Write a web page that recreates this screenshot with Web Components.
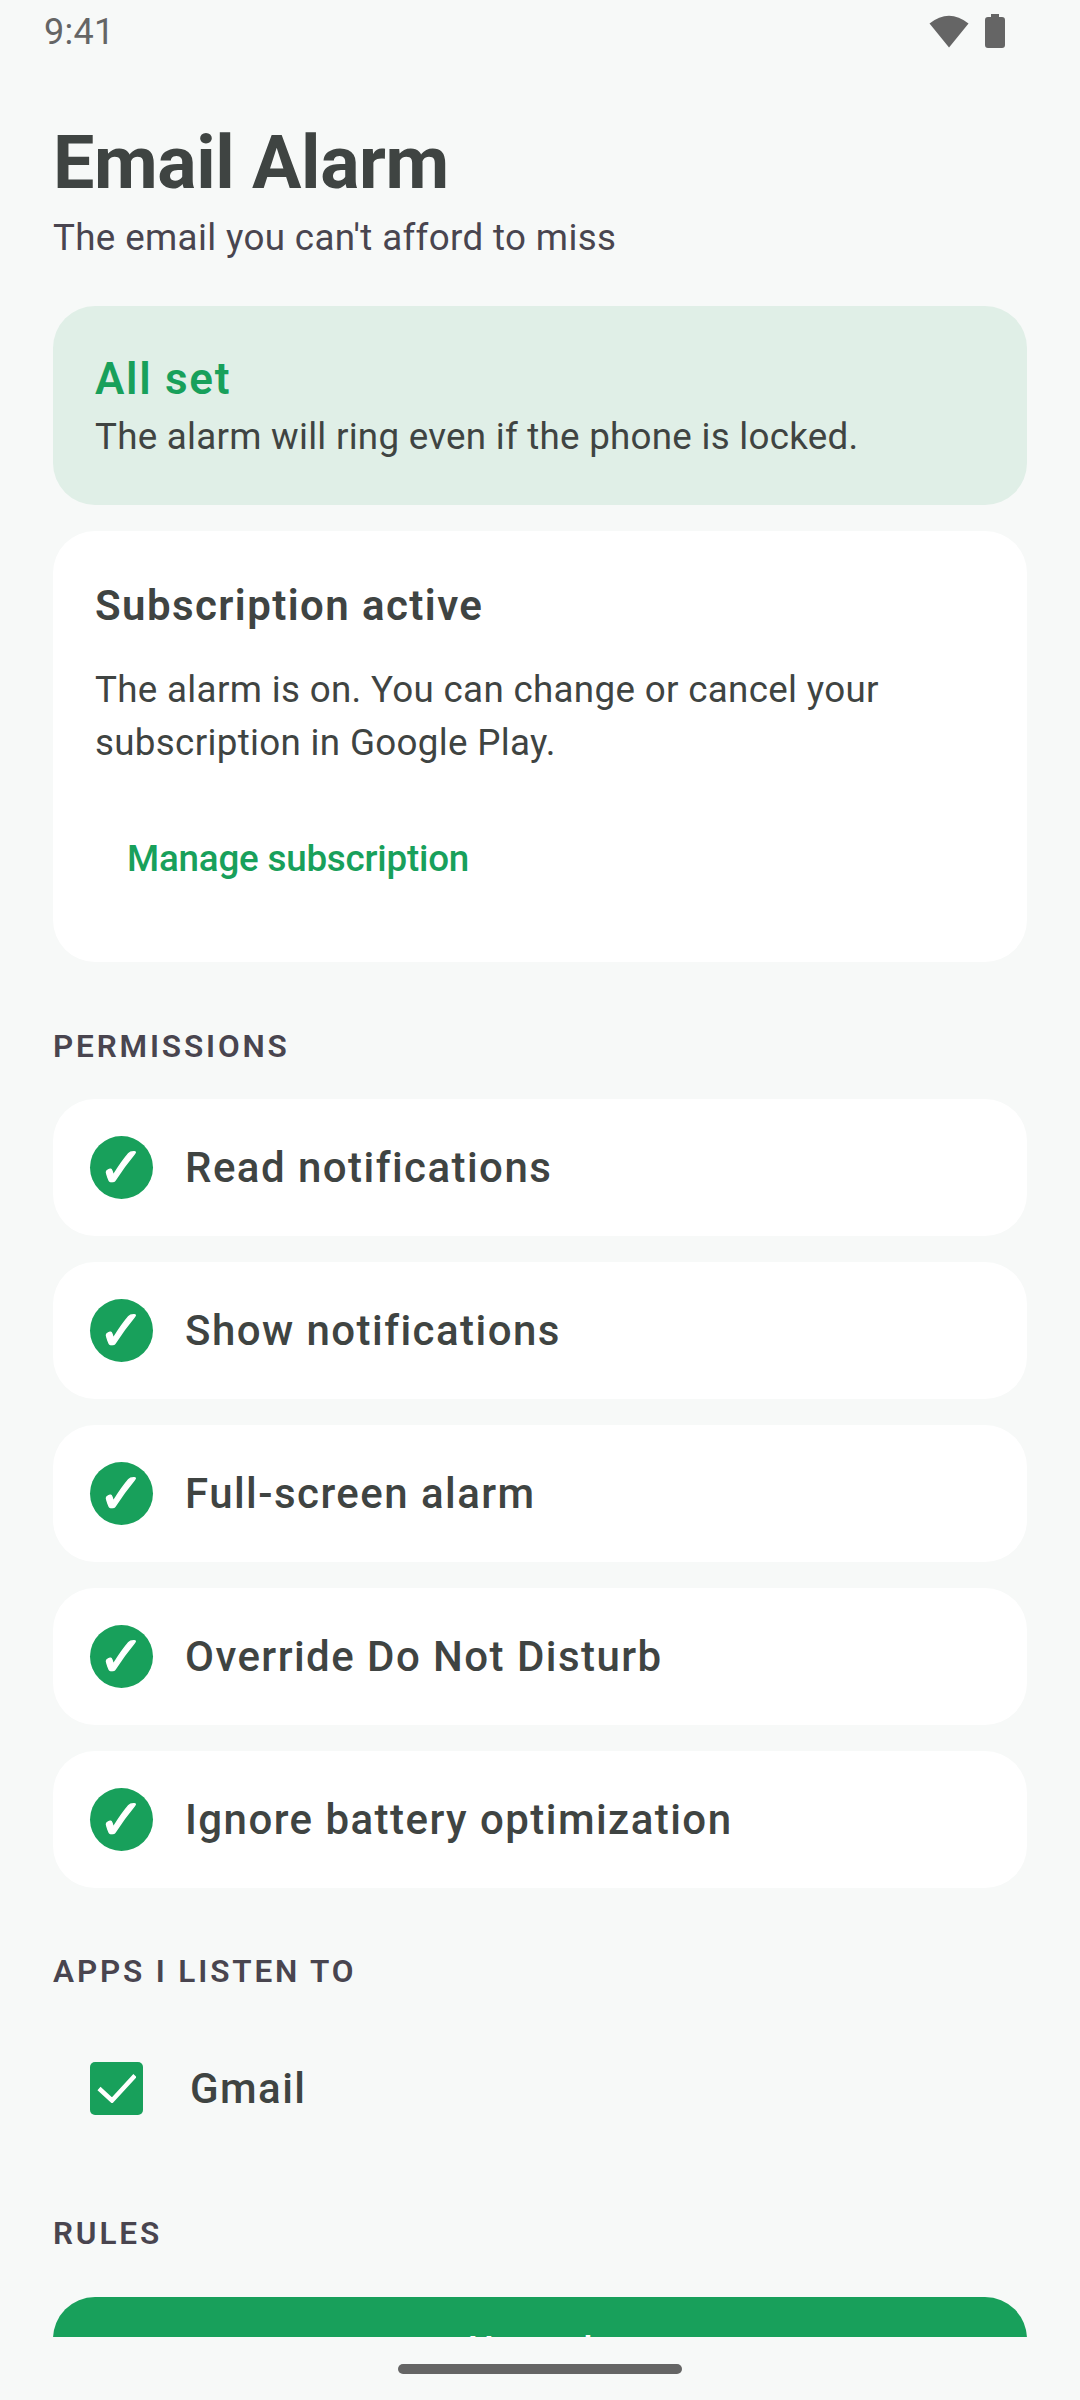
<!DOCTYPE html>
<html>
<head>
<meta charset="utf-8">
<style>
  html, body { margin: 0; padding: 0; background: #f7f9f8; }
  body { width: 1080px; height: 2400px; overflow: hidden; font-family: Roboto, sans-serif; color: #3f4442; }
</style>
</head>
<body>
<app-screen>
  <status-bar slot="status"></status-bar>
  <app-header title="Email Alarm" subtitle="The email you can't afford to miss"></app-header>
  <status-card heading="All set" text="The alarm will ring even if the phone is locked."></status-card>
  <subscription-card></subscription-card>
  <section-label>PERMISSIONS</section-label>
  <permission-row>Read notifications</permission-row>
  <permission-row>Show notifications</permission-row>
  <permission-row>Full-screen alarm</permission-row>
  <permission-row>Override Do Not Disturb</permission-row>
  <permission-row>Ignore battery optimization</permission-row>
  <section-label class="apps">APPS I LISTEN TO</section-label>
  <app-checkbox>Gmail</app-checkbox>
  <section-label class="rules">RULES</section-label>
  <primary-button>New rule</primary-button>
</app-screen>

<script>
// Pantalla completa: barra de estado, contenido recortado y barra de gestos
class AppScreen extends HTMLElement {
    constructor() {
        super();
        this.attachShadow({ mode: 'open' });
        this.shadowRoot.innerHTML = `
            <style>
                :host { display: flex; flex-direction: column; width: 1080px; height: 2400px; background: #f7f9f8; }
                .content { height: 2273px; overflow: hidden; padding: 0 53px; box-sizing: border-box; flex: none; }
                .nav { flex: 1; display: flex; justify-content: center; padding-top: 27px; box-sizing: border-box; }
                .handle { width: 284px; height: 10px; border-radius: 5px; background: #656565; }
            </style>
            <slot name="status"></slot>
            <div class="content"><slot></slot></div>
            <div class="nav"><div class="handle"></div></div>
        `;
    }
}

class StatusBar extends HTMLElement {
    constructor() {
        super();
        this.attachShadow({ mode: 'open' });
        this.shadowRoot.innerHTML = `
            <style>
                :host { display: flex; justify-content: space-between; height: 64px; padding: 0 75px 0 44px; flex: none; }
                .time { font-size: 36px; color: #656565; line-height: 64px; letter-spacing: 0.3px; }
                .icons { display: flex; align-items: flex-start; gap: 16px; padding-top: 14px; }
                svg { display: block; fill: #656565; }
            </style>
            <span class="time">9:41</span>
            <div class="icons">
                <svg width="40" height="34" viewBox="0 0 40 34"><path d="M20 33.5 L0.5 9.5 Q20 -6 39.5 9.5 Z"/></svg>
                <svg width="20" height="34" viewBox="0 0 20 34"><path d="M6 0 H14 V3 H17 Q20 3 20 6 V31 Q20 34 17 34 H3 Q0 34 0 31 V6 Q0 3 3 3 H6 Z"/></svg>
            </div>
        `;
    }
}

class AppHeader extends HTMLElement {
    constructor() {
        super();
        this.attachShadow({ mode: 'open' });
    }
    connectedCallback() {
        this.shadowRoot.innerHTML = `
            <style>
                :host { display: block; padding-top: 56px; margin-bottom: 43px; }
                h1 { margin: 0 0 7px; font-size: 73.5px; font-weight: 700; line-height: 86px; letter-spacing: -0.4px; color: #3f4442; }
                p { margin: 0; font-size: 36.75px; line-height: 50px; letter-spacing: 0.35px; color: #49454f; }
            </style>
            <h1>${this.getAttribute('title')}</h1>
            <p>${this.getAttribute('subtitle')}</p>
        `;
    }
}

class StatusCard extends HTMLElement {
    constructor() {
        super();
        this.attachShadow({ mode: 'open' });
    }
    connectedCallback() {
        this.shadowRoot.innerHTML = `
            <style>
                :host { display: block; background: #e0efe7; border-radius: 42px; padding: 47px 42px 0; height: 199px; box-sizing: border-box; margin-bottom: 26px; }
                h2 { margin: 0 0 7px; font-size: 44px; font-weight: 600; line-height: 52px; color: #18a05b; letter-spacing: 1.7px; }
                p { margin: 0; font-size: 36.75px; line-height: 50px; color: #3f4442; letter-spacing: 0.26px; }
            </style>
            <h2>${this.getAttribute('heading')}</h2>
            <p>${this.getAttribute('text')}</p>
        `;
    }
}

class SubscriptionCard extends HTMLElement {
    constructor() {
        super();
        this.attachShadow({ mode: 'open' });
        this.shadowRoot.innerHTML = `
            <style>
                :host { display: block; background: #fff; border-radius: 42px; padding: 51px 42px 0; height: 431px; box-sizing: border-box; margin-bottom: 66px; }
                h3 { margin: 0 0 33px; font-size: 42px; font-weight: 600; line-height: 48px; color: #3f4442; letter-spacing: 1.42px; }
                p { margin: 0; font-size: 36.75px; line-height: 53px; color: #3f4442; letter-spacing: 0.32px; }
                .link { display: block; margin: 68px 0 0 32px; font-size: 36.75px; font-weight: 500; line-height: 44px; color: #18a05b; letter-spacing: -0.2px; }
            </style>
            <h3>Subscription active</h3>
            <p>The alarm is on. You can change or cancel your<br>subscription in Google Play.</p>
            <span class="link">Manage subscription</span>
        `;
    }
}

class SectionLabel extends HTMLElement {
    constructor() {
        super();
        this.attachShadow({ mode: 'open' });
        this.shadowRoot.innerHTML = `
            <style>
                :host { display: block; font-size: 31.5px; font-weight: 600; line-height: 38px; letter-spacing: 2.85px; color: #49454f; margin-bottom: 33px; }
                :host(.apps) { margin-top: 65px; margin-bottom: 0; }
                :host(.rules) { margin-top: 0; margin-bottom: 44px; }
            </style>
            <slot></slot>
        `;
    }
}

class PermissionRow extends HTMLElement {
    constructor() {
        super();
        this.attachShadow({ mode: 'open' });
        this.shadowRoot.innerHTML = `
            <style>
                :host { display: flex; align-items: center; gap: 32px; height: 137px; background: #fff; border-radius: 42px; padding-left: 37px; box-sizing: border-box; margin-bottom: 26px; font-size: 42px; font-weight: 500; letter-spacing: 1.45px; color: #3f4442; }
                :host(:last-of-type) { margin-bottom: 0; }
                .dot { width: 63px; height: 63px; border-radius: 50%; background: #18a05b; color: #fff; display: flex; align-items: center; justify-content: center; flex: none; font-family: "DejaVu Sans", sans-serif; font-size: 56px; font-weight: 700; letter-spacing: 0; line-height: 63px; -webkit-text-stroke: 1.2px #fff; }
            </style>
            <div class="dot">✓</div>
            <slot></slot>
        `;
    }
}

class AppCheckbox extends HTMLElement {
    constructor() {
        super();
        this.attachShadow({ mode: 'open' });
        this.shadowRoot.innerHTML = `
            <style>
                :host { display: flex; align-items: center; gap: 47px; height: 194px; padding-left: 37px; margin-bottom: 30px; font-size: 42px; font-weight: 500; letter-spacing: 1.45px; color: #3f4442; }
                .box { width: 53px; height: 53px; border-radius: 5px; background: #18a05b; display: flex; align-items: center; justify-content: center; flex: none; }
            </style>
            <div class="box">
                <svg width="39" height="30" viewBox="0 0 39 30"><path d="M2 15.5 L15 27.5 L38 2.5" fill="none" stroke="#fff" stroke-width="4.5"/></svg>
            </div>
            <slot></slot>
        `;
    }
}

class PrimaryButton extends HTMLElement {
    constructor() {
        super();
        this.attachShadow({ mode: 'open' });
        this.shadowRoot.innerHTML = `
            <style>
                :host { display: flex; align-items: center; justify-content: center; height: 105px; border-radius: 42px; background: #18a05b; color: #fff; font-size: 36.75px; font-weight: 500; }
            </style>
            <slot></slot>
        `;
    }
}

customElements.define('app-screen', AppScreen);
customElements.define('status-bar', StatusBar);
customElements.define('app-header', AppHeader);
customElements.define('status-card', StatusCard);
customElements.define('subscription-card', SubscriptionCard);
customElements.define('section-label', SectionLabel);
customElements.define('permission-row', PermissionRow);
customElements.define('app-checkbox', AppCheckbox);
customElements.define('primary-button', PrimaryButton);
</script>
</body>
</html>
